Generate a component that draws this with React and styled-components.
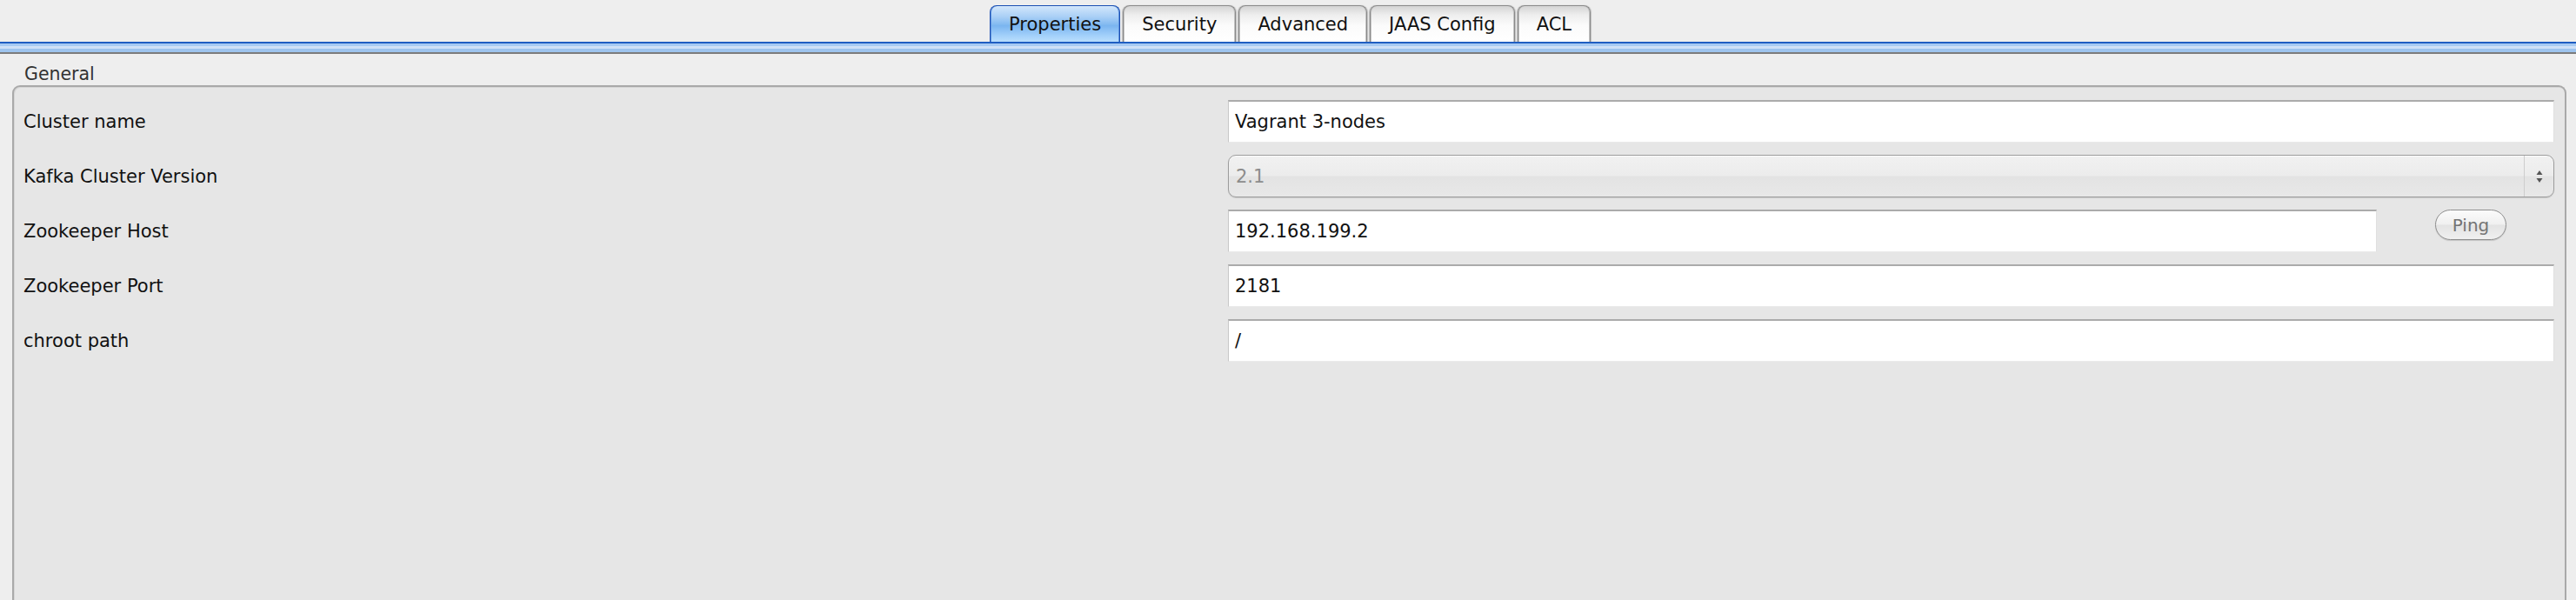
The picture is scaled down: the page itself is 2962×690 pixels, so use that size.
import React from 'react';
import styled, { createGlobalStyle } from 'styled-components';

const GlobalStyle = createGlobalStyle`
  html, body {
    margin: 0;
    padding: 0;
    height: 690px;
    overflow: hidden;
    background: #eeeeee;
  }
  body {
    font-family: "DejaVu Sans", Verdana, sans-serif;
    font-size: 21px;
    color: #111;
  }
`;

const Page = styled.div`
  height: 690px;
  display: flex;
  flex-direction: column;
  overflow: hidden;
`;

const TabBar = styled.div`
  display: flex;
  justify-content: center;
  align-items: flex-end;
  gap: 3px;
  height: 48px;
  flex: 0 0 48px;
  padding-left: 5px;
  box-sizing: border-box;
`;

const Tab = styled.div`
  height: 42px;
  box-sizing: border-box;
  padding: 0 21px;
  display: flex;
  align-items: center;
  border: 1px solid ${p => (p.$active ? '#1b4fb3' : '#8a8a8a')};
  border-bottom: 0;
  border-radius: 8px 8px 0 0;
  color: #111;
  background: ${p =>
    p.$active
      ? 'linear-gradient(to bottom, #d3e7fb 0%, #a9cff6 30%, #86bcf1 50%, #7ab5f0 55%, #a6d2fb 85%, #b9defc 100%)'
      : 'linear-gradient(to bottom, #d4d4d4 0%, #eeeeee 25%, #fbfbfb 55%, #ffffff 100%)'};
  box-shadow: ${p =>
    p.$active
      ? 'inset 1px 0 0 #5f93dd, inset -1px 0 0 #5f93dd'
      : 'inset 1px 0 0 #c4c4c4, inset -1px 0 0 #c4c4c4, 1px 0 1px rgba(0,0,0,0.18), -1px 0 1px rgba(0,0,0,0.18)'};
`;

const Stripe = styled.div`
  height: 14px;
  flex: 0 0 14px;
  background: linear-gradient(
    to bottom,
    #1f5ec2 0px,
    #1f5ec2 2px,
    #a7caf2 2px,
    #a7caf2 5px,
    #cfe1f7 5px,
    #cfe1f7 8px,
    #9ec4ee 8px,
    #9ec4ee 12px,
    #7c7c7c 12px,
    #7c7c7c 14px
  );
`;

const Legend = styled.div`
  padding: 11px 0 0 28px;
  line-height: 25px;
  font-size: 20.5px;
  color: #333;
`;

const GroupBox = styled.div`
  flex: 1;
  min-height: 0;
  margin: 0 11px 0 14px;
  border: 2px solid #a9a9a9;
  border-bottom: 0;
  border-radius: 9px 9px 0 0;
  background: #e6e6e6;
  box-shadow: inset 1px 1px 0 #d6d6d6;
  padding: 15px 12px 0 11px;
  display: grid;
  grid-template-columns: 1fr 1525px;
  grid-auto-rows: 49px;
  row-gap: 14px;
  align-items: center;
  align-content: start;
`;

const Label = styled.div`
  white-space: nowrap;
  color: #111;
`;

const FieldRow = styled.div`
  display: flex;
  align-items: flex-start;
  height: 49px;
`;

const TextField = styled.div`
  height: 49px;
  box-sizing: border-box;
  flex: ${p => (p.$width ? `0 0 ${p.$width}` : '1')};
  background: #fff;
  border-top: 2px solid #ababab;
  border-left: 1px solid #c8c8c8;
  border-right: 1px solid #e0e0e0;
  border-bottom: 1px solid #eaeaea;
  padding-left: 7px;
  display: flex;
  align-items: center;
  color: #111;
  white-space: nowrap;
`;

const Combo = styled.div`
  flex: 1;
  height: 49px;
  box-sizing: border-box;
  border: 1px solid #9c9c9c;
  border-radius: 9px;
  background: linear-gradient(to bottom, #f1f1f1 0%, #ececec 48%, #e3e3e3 52%, #e8e8e8 100%);
  box-shadow: inset 0 1px 1px rgba(255,255,255,0.8), 0 1px 1px rgba(0,0,0,0.12);
  display: flex;
  align-items: center;
  overflow: hidden;
`;

const ComboValue = styled.div`
  flex: 1;
  padding-left: 8px;
  color: #8c8c8c;
`;

const Stepper = styled.div`
  width: 33px;
  align-self: stretch;
  border-left: 1px solid #cdcdcd;
  display: flex;
  align-items: center;
  justify-content: center;
`;

const PingButton = styled.div`
  margin-left: 67px;
  width: 82px;
  height: 35px;
  box-sizing: border-box;
  border: 1px solid #8e8e8e;
  border-radius: 18px;
  background: linear-gradient(to bottom, #fbfbfb 0%, #f0f0f0 48%, #e3e3e3 52%, #f0f0f0 100%);
  box-shadow: 0 1px 1px rgba(0,0,0,0.15);
  display: flex;
  align-items: center;
  justify-content: center;
  color: #747474;
  font-size: 20px;
`;

const tabs = ['Properties', 'Security', 'Advanced', 'JAAS Config', 'ACL'];

const StepperArrows = () => (
  <svg width="10" height="18" viewBox="0 0 10 18">
    <path d="M5 2 L8.5 7 L1.5 7 Z" fill="#555" />
    <path d="M5 16 L8.5 11 L1.5 11 Z" fill="#555" />
  </svg>
);

export default function App() {
  return (
    <Page>
      <GlobalStyle />
      <TabBar>
        {tabs.map(t => (
          <Tab key={t} $active={t === 'Properties'}>
            {t}
          </Tab>
        ))}
      </TabBar>
      <Stripe />
      <Legend>General</Legend>
      <GroupBox>
        <Label>Cluster name</Label>
        <TextField>Vagrant 3-nodes</TextField>

        <Label>Kafka Cluster Version</Label>
        <FieldRow>
          <Combo>
            <ComboValue>2.1</ComboValue>
            <Stepper>
              <StepperArrows />
            </Stepper>
          </Combo>
        </FieldRow>

        <Label>Zookeeper Host</Label>
        <FieldRow>
          <TextField $width="1321px">192.168.199.2</TextField>
          <PingButton>Ping</PingButton>
        </FieldRow>

        <Label>Zookeeper Port</Label>
        <TextField>2181</TextField>

        <Label>chroot path</Label>
        <TextField>/</TextField>
      </GroupBox>
    </Page>
  );
}
